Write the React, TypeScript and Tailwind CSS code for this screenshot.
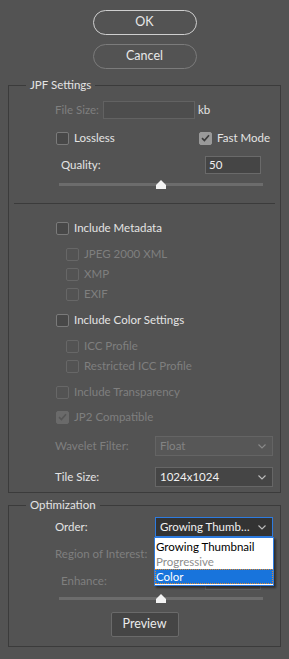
import React from "react";

const FONT = "font-[family-name:Lato,'Liberation_Sans',sans-serif] text-[11.5px]";

// Square checkbox in the Photoshop dark style
const Box = ({ checked, disabled }: { checked?: boolean; disabled?: boolean }) => (
  <span
    className={
      "flex h-[13px] w-[13px] shrink-0 items-center justify-center rounded-[2px] border " +
      (checked
        ? disabled
          ? "border-[#6a6a6a] bg-[#6a6a6a]"
          : "border-[#9a9a9a] bg-[#9a9a9a]"
        : disabled
          ? "border-[#676767] bg-[#535353]"
          : "border-[#7a7a7a] bg-[#484848]")
    }
  >
    {checked && (
      <svg width="9" height="8" viewBox="0 0 9 8">
        <path
          d="M1 4.2 L3.4 6.5 L8 1.3"
          fill="none"
          stroke={disabled ? "#565656" : "#3c3c3c"}
          strokeWidth="1.7"
        />
      </svg>
    )}
  </span>
);

const CheckRow = ({
  label,
  checked,
  disabled,
  className = "",
}: {
  label: string;
  checked?: boolean;
  disabled?: boolean;
  className?: string;
}) => (
  <div className={"flex h-[18px] items-center gap-[5px] " + className}>
    <Box checked={checked} disabled={disabled} />
    <span className={disabled ? "text-[#7f7f7f]" : "text-[#e4e4e4]"}>{label}</span>
  </div>
);

const Chevron = ({ color = "#bdbdbd" }: { color?: string }) => (
  <svg width="8" height="5" viewBox="0 0 8 5" className="shrink-0">
    <path d="M0.5 0.5 L4 4 L7.5 0.5" fill="none" stroke={color} strokeWidth="1.1" />
  </svg>
);

const Slider = ({ className = "" }: { className?: string }) => (
  <div className={"relative ml-[45px] flex h-[10px] w-[204px] items-center " + className}>
    <div className="h-[3px] w-full bg-[#6c6c6c]" />
    <svg
      width="10"
      height="9"
      viewBox="0 0 10 9"
      className="absolute left-[97px] top-[1px]"
    >
      <polygon points="5,0 10,5 10,9 0,9 0,5" fill="#f2f2f2" />
    </svg>
  </div>
);

const Legend = ({ children }: { children: React.ReactNode }) => (
  <legend className="ml-[12px] px-[4px] leading-[16px] text-[#e4e4e4]">{children}</legend>
);

export default function App() {
  return (
    <div className={"flex h-[659px] w-[289px] flex-col bg-[#535353] pt-[10px] " + FONT}>
      {/* Dialog buttons */}
      <button className="mx-auto flex h-[25px] w-[104px] items-center justify-center rounded-full border-[1.5px] border-[#cfcfcf] text-[12.5px] text-[#e8e8e8]">
        OK
      </button>
      <button className="mx-auto mt-[9px] flex h-[25px] w-[104px] items-center justify-center rounded-full border border-[#7b7b7b] text-[12.5px] text-[#e8e8e8]">
        Cancel
      </button>

      {/* JPF Settings */}
      <fieldset className="mx-[8px] mt-[8px] border border-[#3b3b3b] px-[5px] pb-[5px]">
        <Legend>JPF Settings</Legend>

        <div className="ml-[41px] mt-[8px] flex h-[18px] items-center">
          <span className="w-[48px] text-[#7f7f7f]">File Size:</span>
          <div className="h-[18px] w-[92px] border border-[#626262] bg-[#4d4d4d]" />
          <span className="ml-[3px] text-[#e4e4e4]">kb</span>
        </div>

        <div className="ml-[42px] mt-[10px] flex h-[18px] items-center">
          <CheckRow label="Lossless" className="w-[143px]" />
          <CheckRow label="Fast Mode" checked />
        </div>

        <div className="ml-[47px] mt-[9px] flex h-[18px] items-center">
          <span className="w-[144px] text-[#e4e4e4]">Quality:</span>
          <div className="flex h-[18px] w-[56px] items-center border border-[#6a6a6a] bg-[#454545] pl-[3px] text-[#f0f0f0]">
            50
          </div>
        </div>

        <Slider className="mt-[5px]" />

        <div className="mt-[14px] h-px bg-[#3b3b3b]" />

        <CheckRow label="Include Metadata" className="ml-[42px] mt-[15px]" />
        <CheckRow label="JPEG 2000 XML" disabled className="ml-[52px] mt-[8px]" />
        <CheckRow label="XMP" disabled className="ml-[52px] mt-[2px]" />
        <CheckRow label="EXIF" disabled className="ml-[52px] mt-[2px]" />

        <CheckRow label="Include Color Settings" className="ml-[42px] mt-[8px]" />
        <CheckRow label="ICC Profile" disabled className="ml-[52px] mt-[8px]" />
        <CheckRow label="Restricted ICC Profile" disabled className="ml-[52px] mt-[2px]" />

        <CheckRow label="Include Transparency" disabled className="ml-[42px] mt-[8px]" />
        <CheckRow label="JP2 Compatible" checked disabled className="ml-[42px] mt-[7px]" />

        <div className="ml-[41px] mt-[10px] flex h-[20px] items-center">
          <span className="w-[100px] text-[#7f7f7f]">Wavelet Filter:</span>
          <div className="flex h-[20px] w-[118px] items-center justify-between border border-[#646464] bg-[#575757] pl-[4px] pr-[6px] text-[#838383]">
            Float
            <Chevron color="#8a8a8a" />
          </div>
        </div>

        <div className="ml-[41px] mt-[11px] flex h-[20px] items-center">
          <span className="w-[100px] text-[#e4e4e4]">Tile Size:</span>
          <div className="flex h-[20px] w-[118px] items-center justify-between border border-[#666666] bg-[#454545] pl-[4px] pr-[6px] text-[#f0f0f0]">
            1024x1024
            <Chevron />
          </div>
        </div>
      </fieldset>

      {/* Optimization */}
      <fieldset className="mx-[8px] mt-[4px] border border-[#3b3b3b] px-[5px] pb-[9px]">
        <Legend>Optimization</Legend>

        <div className="ml-[41px] mt-[4px] flex h-[20px] items-center">
          <span className="w-[100px] text-[#e4e4e4]">Order:</span>
          <div className="relative h-[20px] w-[118px]">
            <div className="flex h-[20px] w-full items-center justify-between border border-[#2d7be0] bg-[#333333] pl-[4px] pr-[6px] text-[#f0f0f0]">
              Growing Thumb…
              <Chevron />
            </div>
            {/* open dropdown list */}
            <div className="absolute left-[-1px] top-[20px] z-10 w-[120px] border border-[#2d7be0] bg-white py-px shadow-[2px_2px_2px_rgba(0,0,0,0.45)]">
              <div className="flex h-[15px] items-center pl-[1px] text-black">Growing Thumbnail</div>
              <div className="flex h-[15px] items-center pl-[1px] text-[#8d8d8d]">Progressive</div>
              <div className="flex h-[15px] items-center border border-dotted border-[#e08a2c] bg-[#1874dc] pl-0 text-white">
                Color
              </div>
            </div>
          </div>
        </div>

        <div className="ml-[41px] mt-[8px] flex h-[18px] items-center text-[#7f7f7f]">
          Region of Interest:
        </div>

        <div className="ml-[47px] mt-[9px] flex h-[18px] items-center">
          <span className="w-[144px] text-[#7f7f7f]">Enhance:</span>
          <div className="h-[18px] w-[56px] border border-[#626262] bg-[#4d4d4d]" />
        </div>

        <Slider className="mt-[3px]" />

        <button className="mx-auto mt-[9px] flex h-[25px] w-[68px] items-center justify-center rounded-[2px] border border-[#6a6a6a] bg-[#454545] text-[12.5px] text-[#ececec]">
          Preview
        </button>
      </fieldset>
    </div>
  );
}
